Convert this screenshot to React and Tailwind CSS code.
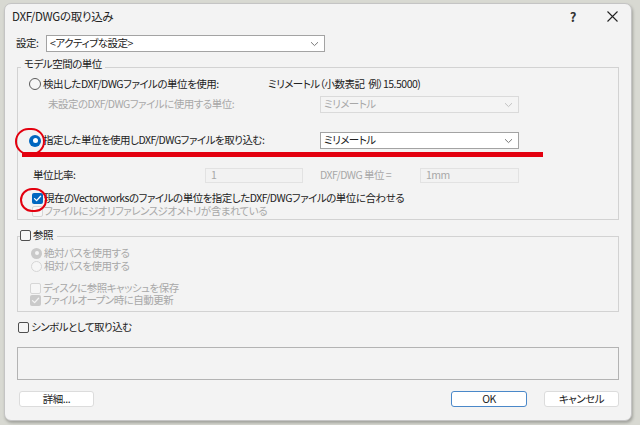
import React from 'react';

const font = "font-['Noto_Sans_CJK_JP','Noto_Sans',sans-serif] [font-feature-settings:'palt']";

const Check = ({ color }) => (
  <svg width="9" height="9" viewBox="0 0 9 9" fill="none">
    <path d="M1.5 4.6 L3.6 6.6 L7.6 2.2" stroke={color} strokeWidth="1.3" strokeLinecap="round" strokeLinejoin="round" />
  </svg>
);

const Radio = ({ on, dim }) => {
  if (on && !dim)
    return (
      <span className="flex h-[12px] w-[12px] shrink-0 items-center justify-center rounded-full bg-[#0067c0]">
        <span className="h-[5px] w-[5px] rounded-full bg-white" />
      </span>
    );
  if (on && dim)
    return (
      <span className="flex h-[11px] w-[11px] shrink-0 items-center justify-center rounded-full bg-[#c9c9c9]">
        <span className="h-[4px] w-[4px] rounded-full bg-[#f4f4f4]" />
      </span>
    );
  if (dim) return <span className="h-[11px] w-[11px] shrink-0 rounded-full border border-[#d6d6d6] bg-[#f6f6f6]" />;
  return <span className="h-[12px] w-[12px] shrink-0 rounded-full border border-[#5b5b5b] bg-[#f6f6f6]" />;
};

const Box = ({ on, dim }) => {
  if (on && !dim)
    return (
      <span className="flex h-[11px] w-[11px] shrink-0 items-center justify-center rounded-[2px] bg-[#0067c0]">
        <Check color="#fff" />
      </span>
    );
  if (on && dim)
    return (
      <span className="flex h-[11px] w-[11px] shrink-0 items-center justify-center rounded-[2px] bg-[#cacaca]">
        <Check color="#f4f4f4" />
      </span>
    );
  if (dim) return <span className="h-[11px] w-[11px] shrink-0 rounded-[2px] border border-[#d6d6d6] bg-[#f6f6f6]" />;
  return <span className="h-[11px] w-[11px] shrink-0 rounded-[2px] border border-[#4f4f4f] bg-[#f6f6f6]" />;
};

const Chevron = ({ color }) => (
  <svg width="9" height="6" viewBox="0 0 9 6" fill="none">
    <path d="M1 1.2 L4.5 4.6 L8 1.2" stroke={color} strokeWidth="1" />
  </svg>
);

const Select = ({ value, dim, w }) => (
  <div
    className={
      dim
        ? 'flex h-[17px] items-center justify-between border border-[#dadada] bg-[#f4f4f4] pl-[3px] pr-[5px] text-[#a8a8a8]'
        : 'flex h-[17px] items-center justify-between border border-[#a3a3a3] bg-white pl-[3px] pr-[5px] text-[#222]'
    }
    style={{ width: w }}
  >
    <span className="leading-none">{value}</span>
    <Chevron color={dim ? '#c2c2c2' : '#7a7a7a'} />
  </div>
);

const Field = ({ value, w }) => (
  <div className="flex h-[15px] items-center border border-[#e2e2e2] bg-[#f2f2f2] pl-[5px] text-[#a8a8a8]" style={{ width: w }}>
    <span className="leading-none">{value}</span>
  </div>
);

const Button = ({ children, primary }) => (
  <button
    className={
      primary
        ? 'h-[16px] w-[76px] rounded-[3px] border-[1.5px] border-[#4a88c9] bg-white text-[10.5px] leading-none text-[#222]'
        : 'h-[16px] w-[75px] rounded-[3px] border border-[#dcdcdc] bg-white text-[10.5px] leading-none text-[#222]'
    }
  >
    {children}
  </button>
);

export default function App() {
  return (
    <div className={`relative h-[425px] w-[640px] overflow-hidden bg-[#d8d9d2] pl-[4px] pt-[3px] text-[10.5px] tracking-[-0.5px] text-[#222] ${font}`}>
      <div className="flex h-[418px] w-[628px] flex-col rounded-[7px] border border-[#c4c4c4] bg-[#f3f3f3] shadow-[1px_2px_3px_rgba(0,0,0,0.25)]">
        {/* title bar */}
        <div className="flex h-[24px] shrink-0 items-center pl-[7px] pt-[1px]">
          <span className="text-[11.5px] leading-none tracking-[-0.3px]">DXF/DWGの取り込み</span>
          <span className="ml-auto mr-[31px] text-[13px] font-bold leading-none text-[#333]">?</span>
          <svg className="mr-[13px]" width="11" height="11" viewBox="0 0 11 11">
            <path d="M0.5 0.5 L10.5 10.5 M10.5 0.5 L0.5 10.5" stroke="#222" strokeWidth="1.1" />
          </svg>
        </div>

        {/* settings */}
        <div className="mt-[7px] flex items-center pl-[11px]">
          <span className="w-[30px] leading-none">設定:</span>
          <Select value="<アクティブな設定>" w={279} />
        </div>

        {/* model space units */}
        <div className="relative ml-[12px] mt-[15px] h-[153px] w-[602px] border border-[#d2d2d2] pb-[2px]">
          <span className="absolute -top-[9px] left-[3px] bg-[#f3f3f3] px-[3px] leading-none">モデル空間の単位</span>

          <div className="mt-[8px] flex h-[16px] items-center pl-[11px]">
            <div className="flex w-[239px] items-center gap-[2px]">
              <Radio />
              <span className="leading-none">検出したDXF/DWGファイルの単位を使用:</span>
            </div>
            <span className="leading-none">ミリメートル（小数表記&nbsp;&nbsp;例）15.5000)</span>
          </div>

          <div className="mt-[4px] flex items-center pl-[30px]">
            <span className="w-[272px] leading-none text-[#a8a8a8]">未設定のDXF/DWGファイルに使用する単位:</span>
            <Select value="ミリメートル" dim w={199} />
          </div>

          <div className="mt-[19px] flex items-center pl-[11px]">
            <div className="flex w-[291px] items-center gap-[2px]">
              <Radio on />
              <span className="leading-none">指定した単位を使用しDXF/DWGファイルを取り込む:</span>
            </div>
            <Select value="ミリメートル" w={199} />
          </div>

          <div className="mt-[19px] flex items-center pl-[15px]">
            <span className="w-[172px] leading-none">単位比率:</span>
            <Field value="1" w={98} />
            <span className="ml-[17px] w-[100px] leading-none text-[#a8a8a8]">DXF/DWG&nbsp;単位 =</span>
            <Field value="1mm" w={99} />
          </div>

          <div className="mt-[8px] flex h-[14px] items-center gap-[1px] pl-[14px]">
            <Box on />
            <span className="leading-none">現在のVectorworksのファイルの単位を指定したDXF/DWGファイルの単位に合わせる</span>
          </div>
          <div className="flex h-[13px] items-center gap-[1px] pl-[14px]">
            <Box dim />
            <span className="leading-none text-[#a8a8a8]">ファイルにジオリファレンスジオメトリが含まれている</span>
          </div>
        </div>

        {/* reference */}
        <div className="relative ml-[12px] mt-[16px] h-[76px] w-[602px] border border-[#d2d2d2]">
          <div className="absolute -top-[7px] left-[2px] flex items-center gap-[2px] bg-[#f3f3f3] pr-[4px]">
            <Box />
            <span className="leading-none">参照</span>
          </div>

          <div className="mt-[10px] flex h-[12px] items-center gap-[2px] pl-[13px]">
            <Radio on dim />
            <span className="leading-none text-[#a8a8a8]">絶対パスを使用する</span>
          </div>
          <div className="mt-[1px] flex h-[12px] items-center gap-[2px] pl-[13px]">
            <Radio dim />
            <span className="leading-none text-[#a8a8a8]">相対パスを使用する</span>
          </div>
          <div className="mt-[10px] flex h-[12px] items-center gap-[2px] pl-[12px]">
            <Box dim />
            <span className="leading-none text-[#a8a8a8]">ディスクに参照キャッシュを保存</span>
          </div>
          <div className="flex h-[12px] items-center gap-[2px] pl-[12px]">
            <Box on dim />
            <span className="leading-none text-[#a8a8a8]">ファイルオープン時に自動更新</span>
          </div>
        </div>

        <div className="ml-[13px] mt-[8px] flex h-[14px] items-center gap-[2px]">
          <Box />
          <span className="leading-none">シンボルとして取り込む</span>
        </div>

        <div className="ml-[12px] mt-[13px] h-[33px] w-[602px] border border-[#b3b3b3]" />

        <div className="mt-[11px] flex items-center pl-[14px] pr-[12px]">
          <Button>詳細...</Button>
          <div className="ml-auto flex gap-[17px]">
            <Button primary>OK</Button>
            <Button>キャンセル</Button>
          </div>
        </div>
      </div>

      {/* red annotations */}
      <div className="absolute left-[15px] top-[128px] h-[27px] w-[30px] rounded-full border-[2px] border-[#e3000f]" />
      <div className="absolute left-[22px] top-[152px] h-[5px] w-[521px] bg-[#e3000f]" />
      <div className="absolute left-[20px] top-[188px] h-[24px] w-[27px] rounded-full border-[2px] border-[#e3000f]" />
    </div>
  );
}
